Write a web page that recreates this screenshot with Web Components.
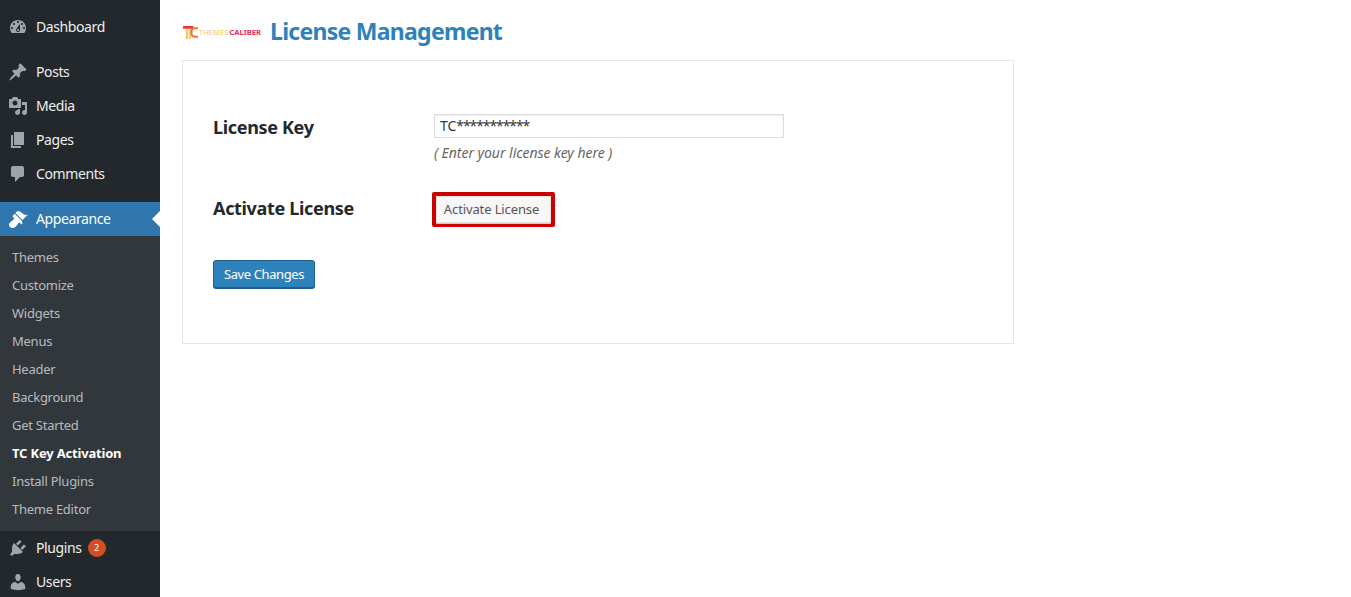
<!DOCTYPE html>
<html lang="en">
<head>
<meta charset="utf-8">
<title>License Management</title>
<style>
  html, body { margin: 0; height: 100%; overflow: hidden; background: #fff; }
  body { display: flex; font-family: "Noto Sans", "Open Sans", sans-serif; font-size: 14px; color: #444; }
</style>
</head>
<body>
<wp-sidebar>
  <wp-menu-item icon="dashboard" style="margin-bottom:11px">Dashboard</wp-menu-item>
  <wp-menu-item icon="pin">Posts</wp-menu-item>
  <wp-menu-item icon="media">Media</wp-menu-item>
  <wp-menu-item icon="pages">Pages</wp-menu-item>
  <wp-menu-item icon="comments" style="margin-bottom:11px">Comments</wp-menu-item>
  <wp-menu-item icon="appearance" current>Appearance</wp-menu-item>
  <wp-submenu>
    <wp-submenu-item>Themes</wp-submenu-item>
    <wp-submenu-item>Customize</wp-submenu-item>
    <wp-submenu-item>Widgets</wp-submenu-item>
    <wp-submenu-item>Menus</wp-submenu-item>
    <wp-submenu-item>Header</wp-submenu-item>
    <wp-submenu-item>Background</wp-submenu-item>
    <wp-submenu-item>Get Started</wp-submenu-item>
    <wp-submenu-item current>TC Key Activation</wp-submenu-item>
    <wp-submenu-item>Install Plugins</wp-submenu-item>
    <wp-submenu-item>Theme Editor</wp-submenu-item>
  </wp-submenu>
  <wp-menu-item icon="plugins" count="2">Plugins</wp-menu-item>
  <wp-menu-item icon="users">Users</wp-menu-item>
</wp-sidebar>
<license-page></license-page>

<script>
const ICONS = {
  dashboard: 'M3.76 16h12.48c1.1-1.37 1.76-3.11 1.76-5 0-4.42-3.58-8-8-8s-8 3.58-8 8c0 1.89.66 3.63 1.76 5zM10 4c.55 0 1 .45 1 1s-.45 1-1 1-1-.45-1-1 .45-1 1-1zM6 6c.55 0 1 .45 1 1s-.45 1-1 1-1-.45-1-1 .45-1 1-1zm8 0c.55 0 1 .45 1 1s-.45 1-1 1-1-.45-1-1 .45-1 1-1zm-5.37 5.55L12 7v6c0 1.1-.9 2-2 2s-2-.9-2-2c0-.57.24-1.08.63-1.45zM4 10c.55 0 1 .45 1 1s-.45 1-1 1-1-.45-1-1 .45-1 1-1zm12 0c.55 0 1 .45 1 1s-.45 1-1 1-1-.45-1-1 .45-1 1-1zm-5 3c0-.55-.45-1-1-1s-1 .45-1 1 .45 1 1 1 1-.45 1-1z',
  pin: 'M10.44 3.02l1.82-1.82 6.36 6.35-1.83 1.82c-1.05-.68-2.48-.57-3.41.36l-.75.75c-.92.93-1.04 2.35-.35 3.41l-1.83 1.82-2.41-2.41-2.8 2.79c-.42.42-3.38 2.71-3.8 2.29s1.86-3.39 2.28-3.81l2.79-2.79L4.1 9.36l1.83-1.82c1.05.69 2.48.57 3.4-.36l.75-.75c.93-.92 1.05-2.35.36-3.41z',
  media: 'M13 11V4c0-.55-.45-1-1-1h-1.67L9 1H5L3.67 3H2c-.55 0-1 .45-1 1v7c0 .55.45 1 1 1h10c.55 0 1-.45 1-1zM7 4.5c1.38 0 2.5 1.12 2.5 2.5S8.38 9.5 7 9.5 4.5 8.38 4.5 7 5.62 4.5 7 4.5zM14 6h5v10.5c0 1.38-1.12 2.5-2.5 2.5S14 17.88 14 16.5s1.12-2.5 2.5-2.5c.17 0 .34.02.5.05V9h-3V6zm-4 8.05V13h2v3.5c0 1.38-1.12 2.5-2.5 2.5S7 17.88 7 16.5 8.12 14 9.5 14c.17 0 .34.02.5.05z',
  pages: 'M6 15V2h10v13H6zm-1 1h8v2H3V5h2v11z',
  comments: 'M5 2h9c1.1 0 2 .9 2 2v7c0 1.1-.9 2-2 2h-2l-5 5v-5H5c-1.1 0-2-.9-2-2V4c0-1.1.9-2 2-2z',
  appearance: 'M14.48 11.06L7.41 3.99l1.5-1.5c.5-.56 2.3-.47 3.51.32 1.21.8 1.43 1.28 2.91 2.1 1.18.64 2.45 1.26 4.45.85zm-.71.71L6.7 4.7 4.93 6.47c-.39.39-.39 1.02 0 1.41l1.06 1.06c.39.39.39 1.03 0 1.42-.6.6-1.43 1.11-2.21 1.69-.35.26-.7.53-1.01.84C1.43 13.26 0 16 2 18s4.74.57 6.12-.82c.31-.31.58-.66.84-1.01.58-.78 1.09-1.61 1.69-2.21.39-.39 1.02-.39 1.41 0l1.06 1.06c.39.39 1.02.39 1.41 0z',
  plugins: 'M13.11 4.36L9.87 7.6 8 5.73l3.24-3.24c.35-.34 1.05-.2 1.56.32.52.51.66 1.21.31 1.55zm-8 1.77l.91-1.12 9.01 9.01-1.19.84c-.71.71-2.63 1.16-3.82 1.16H6.14L4.9 17.26c-.59.59-1.54.59-2.12 0-.59-.58-.59-1.53 0-2.12l1.24-1.24v-3.88c0-1.13.4-3.19 1.09-3.89zm7.26 3.97l3.24-3.24c.34-.35 1.04-.21 1.55.31.52.51.66 1.21.32 1.55l-3.25 3.25z',
  users: 'M10 9.25c-2.27 0-2.73-3.44-2.73-3.44C7 4.02 7.82 2 9.97 2c2.16 0 2.98 2.02 2.71 3.81 0 0-.41 3.44-2.68 3.44zm0 2.57L12.72 10c2.39 0 4.52 2.33 4.52 4.53v2.49s-3.65 1.13-7.24 1.13c-3.65 0-7.24-1.13-7.24-1.13v-2.49c0-2.25 1.94-4.48 4.47-4.48z'
};

class WpSidebar extends HTMLElement {
  constructor() {
    super();
    this.attachShadow({ mode: 'open' }).innerHTML = `
      <style>
        :host { display: block; flex: none; width: 160px; height: 100%; background: #23282d; padding-top: 10px; box-sizing: border-box; overflow: hidden; }
      </style>
      <slot></slot>`;
  }
}

class WpMenuItem extends HTMLElement {
  constructor() {
    super();
    const count = this.getAttribute('count');
    this.attachShadow({ mode: 'open' }).innerHTML = `
      <style>
        :host { display: flex; align-items: center; position: relative; height: 34px; color: #eee; font-size: 14px; }
        :host([current]) { background: #2e76ad; color: #fff; }
        :host([current])::after {
          content: ''; position: absolute; right: 0; top: 9px;
          border: 8px solid transparent; border-right-color: #fff; border-left-width: 0;
        }
        svg { width: 20px; height: 20px; margin: 0 8px; flex: none; fill: #a0a5aa; }
        :host([current]) svg { fill: #fff; }
        .text { letter-spacing: -.4px; padding-bottom: 2px; }
        .count {
          display: inline-block; margin-left: 6px; width: 18px; height: 18px; border-radius: 50%;
          background: #d54e21; color: #fff; font-size: 9px; line-height: 18px; text-align: center;
        }
      </style>
      <svg viewBox="0 0 20 20"><path d="${ICONS[this.getAttribute('icon')]}"/></svg>
      <span class="text"><slot></slot></span>
      ${count ? `<span class="count">${count}</span>` : ''}`;
  }
}

class WpSubmenu extends HTMLElement {
  constructor() {
    super();
    this.attachShadow({ mode: 'open' }).innerHTML = `
      <style>
        :host { display: block; background: #32373c; padding: 7px 0 8px; }
      </style>
      <slot></slot>`;
  }
}

class WpSubmenuItem extends HTMLElement {
  constructor() {
    super();
    this.attachShadow({ mode: 'open' }).innerHTML = `
      <style>
        :host { display: block; height: 28px; line-height: 28px; padding-left: 12px; font-size: 13px; letter-spacing: -.26px; color: rgba(240,245,250,.7); white-space: nowrap; }
        :host([current]) { color: #fff; font-weight: 700; letter-spacing: -.18px; }
      </style>
      <slot></slot>`;
  }
}

class TcLogo extends HTMLElement {
  constructor() {
    super();
    this.attachShadow({ mode: 'open' }).innerHTML = `
      <style>
        :host { display: inline-flex; align-items: center; width: 88px; padding: 2px 0 0 1px; box-sizing: border-box; flex: none; white-space: nowrap; }
        svg { width: 15px; height: 13px; flex: none; }
        .name { font-size: 7.6px; font-weight: 700; line-height: 13px; margin-left: 1px; word-spacing: -1px; }
        .a { color: #f6c667; font-weight: 400; }
        .b { color: #ee2a5b; }
      </style>
      <svg viewBox="0 0 16 14">
        <rect x="0" y="0" width="11" height="3" fill="#e8353f"/>
        <rect x="3" y="3" width="2.5" height="11" fill="#f8c85c"/>
        <rect x="6.5" y="3" width="2" height="11" fill="#f8c85c"/>
        <path d="M16 11.5h-3.5a3.5 3.5 0 0 1-3.5-3.5V6a3.5 3.5 0 0 1 3.5-3.500H16" fill="none" stroke="#f0703c" stroke-width="2.200"/>
      </svg>
      <span class="name"><span class="a">THEMES</span> <span class="b">CALIBER</span></span>`;
  }
}

class FormRow extends HTMLElement {
  constructor() {
    super();
    this.attachShadow({ mode: 'open' }).innerHTML = `
      <style>
        :host { display: grid; grid-template-columns: 221px 1fr; }
        .label { font-size: 18px; font-weight: 700; letter-spacing: -.33px; color: #23282d; line-height: 24px; padding-top: var(--label-offset, 0); }
      </style>
      <div class="label"><slot name="label"></slot></div>
      <div><slot></slot></div>`;
  }
}

class LicensePage extends HTMLElement {
  constructor() {
    super();
    this.attachShadow({ mode: 'open' }).innerHTML = `
      <style>
        :host { display: block; flex: 1; padding: 15px 22px 0; box-sizing: border-box; }
        header { display: flex; align-items: center; height: 32px; }
        h1 { margin: 0; font-size: 23px; font-weight: 700; letter-spacing: -.72px; line-height: 32px; color: #2e82bb; }
        .card { width: 832px; height: 284px; box-sizing: border-box; margin-top: 13px; border: 1px solid #e5e5e5; padding: 53px 30px 0; }
        .key {
          display: block; width: 350px; height: 24px; box-sizing: border-box; margin: 0;
          border: 1px solid #ddd; box-shadow: inset 0 1px 2px rgba(0,0,0,.07);
          padding: 0 5px; font: 14px/22px "Noto Sans", sans-serif; color: #32373c; background: #fff;
        }
        .key span { letter-spacing: -1.1px; }
        .hint { font-size: 14px; font-style: italic; letter-spacing: -.04px; color: #666; line-height: 20px; margin-top: 5px; }
        .key-row { --label-offset: 1px; }
        .activate-row { --label-offset: 4px; margin-top: 29px; }
        .outline { display: inline-block; margin-left: -2px; border: 4px solid #c00; border-radius: 2px; }
        button { display: block; margin: 0; font: 13px "Noto Sans", sans-serif; cursor: pointer; box-sizing: border-box; }
        .secondary { width: 115px; height: 27px; padding: 0 4px 2px 0; letter-spacing: -.12px; color: #555; background: #f7f7f7; border: 1px solid #e2e2e2; border-radius: 1px; box-shadow: 0 1px 0 #ccc; }
        .primary { width: 102px; height: 28px; margin-top: 33px; padding: 0 0 1px; letter-spacing: -.4px; color: #fff; background: #2e82bb; border: 1px solid #1f5f8f; border-radius: 3px; box-shadow: 0 1px 0 #1f5f8f; }
      </style>
      <header><tc-logo></tc-logo><h1>License Management</h1></header>
      <div class="card">
        <form-row class="key-row">
          <span slot="label">License Key</span>
          <div class="key">TC<span>***********</span></div>
          <div class="hint">( Enter your license key here )</div>
        </form-row>
        <form-row class="activate-row">
          <span slot="label">Activate License</span>
          <span class="outline"><button type="button" class="secondary">Activate License</button></span>
        </form-row>
        <button type="button" class="primary">Save Changes</button>
      </div>`;
  }
}

customElements.define('wp-sidebar', WpSidebar);
customElements.define('wp-menu-item', WpMenuItem);
customElements.define('wp-submenu', WpSubmenu);
customElements.define('wp-submenu-item', WpSubmenuItem);
customElements.define('tc-logo', TcLogo);
customElements.define('form-row', FormRow);
customElements.define('license-page', LicensePage);
</script>
</body>
</html>
